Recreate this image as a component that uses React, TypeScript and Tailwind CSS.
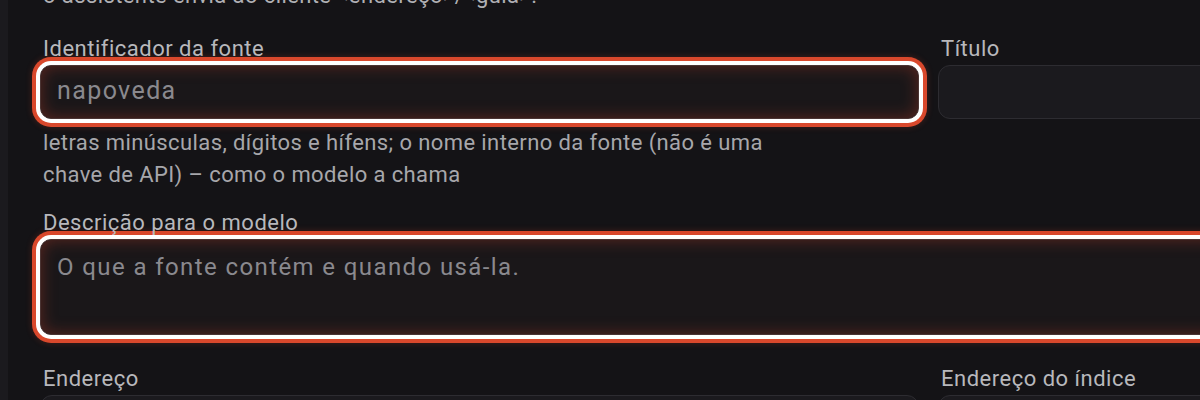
import React from "react";

const roboto = { fontFamily: "Roboto, 'Noto Sans', sans-serif" };

function Label({ children }: { children: React.ReactNode }) {
  return (
    <label className="block pl-[3px] mb-[2px] text-[22px] leading-[28px] tracking-[0.5px] text-[#b8b8bc] whitespace-nowrap">
      {children}
    </label>
  );
}

export default function App() {
  return (
    <div
      className="flex w-[1200px] h-[400px] overflow-hidden bg-[#141316]"
      style={roboto}
    >
      {/* sidebar edge */}
      <div className="w-[8px] shrink-0 bg-[#1b1a1e]" />

      <div className="flex-1 min-w-0 pl-[32px]">
        <p className="-mt-[20px] pl-[3px] text-[22px] leading-[32px] tracking-[0.4px] text-[#b0b0b4] whitespace-nowrap">
          o assistente envia ao cliente &lt;endereço&gt;/&lt;guia&gt;.
        </p>

        {/* source id + title */}
        <div className="mt-[23px] grid grid-cols-[879px_420px] gap-x-[19px]">
          <div>
            <Label>Identificador da fonte</Label>
            <input
              readOnly
              placeholder="napoveda"
              className="block w-full h-[54px] rounded-[11px] border border-[#4a3433] bg-[#1a1719] px-[16px] pb-[4px] text-[25px] tracking-[1.4px] text-[#d0d0d4] placeholder:text-[#8a898e] outline-none shadow-[inset_0_0_16px_rgba(190,60,40,0.4),0_0_0_4px_#ffffff,0_0_0_8px_#d9482c,0_0_6px_8px_rgba(217,72,44,0.25)]"
              style={roboto}
            />
            <p className="mt-[8px] pl-[3px] max-w-[760px] text-[22px] leading-[32px] tracking-[0.4px] text-[#a7a7ab]">
              letras minúsculas, dígitos e hífens; o nome interno da fonte (não
              é uma chave de API) – como o modelo a chama
            </p>
          </div>
          <div>
            <Label>Título</Label>
            <input
              readOnly
              className="block w-full h-[54px] rounded-[12px] border border-[#2d2c31] bg-[#1b1a1e] px-[16px] text-[22px] text-[#d0d0d4] outline-none"
              style={roboto}
            />
          </div>
        </div>

        {/* description */}
        <div className="mt-[18px] w-[1300px]">
          <Label>Descrição para o modelo</Label>
          <textarea
            readOnly
            rows={3}
            placeholder="O que a fonte contém e quando usá-la."
            className="block w-full h-[96px] resize-none rounded-[11px] border border-[#4a3433] bg-[#1a1719] px-[16px] pt-[11px] text-[24px] leading-[32px] tracking-[1.4px] text-[#d0d0d4] placeholder:text-[#8a898e] outline-none shadow-[inset_0_0_16px_rgba(190,60,40,0.4),0_0_0_4px_#ffffff,0_0_0_8px_#d9482c,0_0_6px_8px_rgba(217,72,44,0.25)]"
            style={roboto}
          />
        </div>

        {/* address + index address */}
        <div className="mt-[30px] grid grid-cols-[879px_420px] gap-x-[19px]">
          <div>
            <Label>Endereço</Label>
            <div className="h-[54px] rounded-[12px] border border-[#2d2c31] bg-[#1b1a1e]" />
          </div>
          <div>
            <Label>Endereço do índice</Label>
            <div className="h-[54px] rounded-[12px] border border-[#2d2c31] bg-[#1b1a1e]" />
          </div>
        </div>
      </div>
    </div>
  );
}
